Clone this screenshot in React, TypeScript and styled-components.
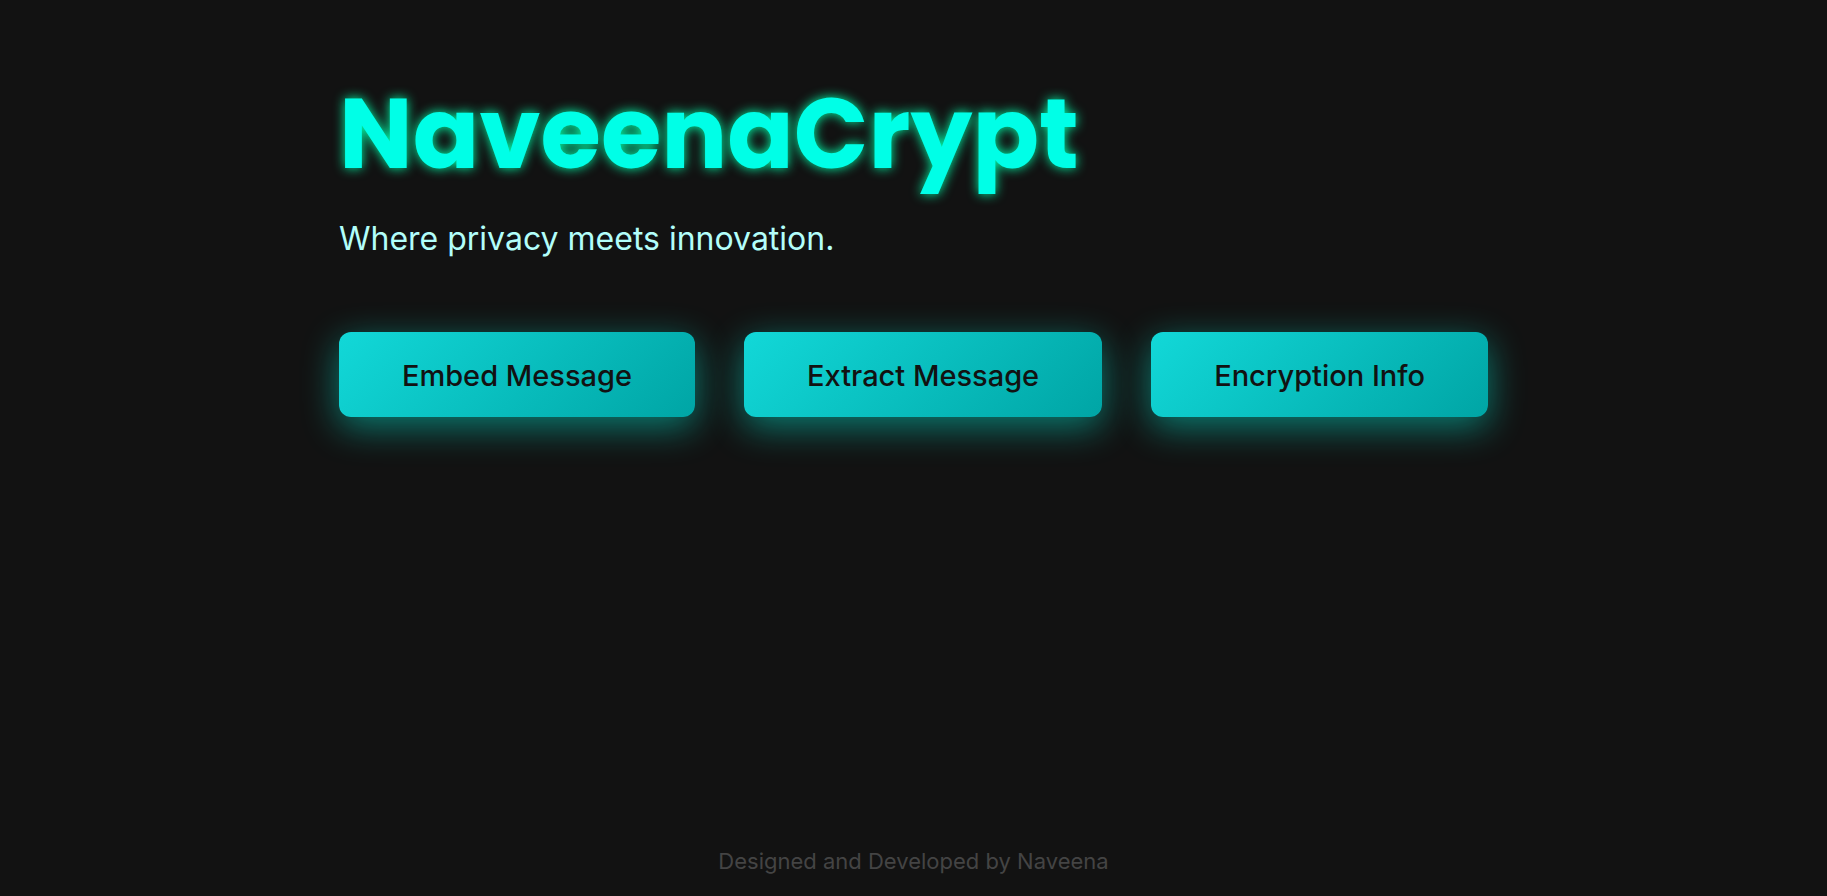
import React from "react";
import styled, { createGlobalStyle } from "styled-components";

const GlobalStyle = createGlobalStyle`
  *, *::before, *::after { box-sizing: border-box; }
  body {
    margin: 0;
    background: #121212;
    font-family: Inter, "Liberation Sans", sans-serif;
  }
`;

const Page = styled.div`
  min-height: 100vh;
  display: flex;
  flex-direction: column;
  align-items: center;
  padding: 78px 24px 17px;
`;

const Main = styled.main`
  flex: 1;
`;

const Title = styled.h1`
  margin: 0;
  font-family: Poppins, Inter, "Liberation Sans", sans-serif;
  font-feature-settings: "cv11" 1;
  font-size: 98px;
  line-height: 112px;
  font-weight: 700;
  color: #00ffe7;
  text-shadow: 0 0 12px #00ffaa;
`;

const Tagline = styled.p`
  margin: 29px 0 73px;
  font-size: 32px;
  line-height: 40px;
  font-weight: 400;
  color: #b2fefa;
`;

const Actions = styled.div`
  display: flex;
  flex-wrap: wrap;
  gap: 49px;
`;

const ActionButton = styled.button`
  border: none;
  border-radius: 12px;
  padding: 25px 63px 23px;
  background: linear-gradient(135deg, #12d8d8, #00a5a5);
  color: #121212;
  font-family: inherit;
  font-size: 29px;
  line-height: 37px;
  font-weight: 500;
  cursor: pointer;
  box-shadow: 0 10px 36px rgba(0, 255, 231, 0.45);
`;

const Footer = styled.footer`
  font-size: 22px;
  line-height: 36px;
  font-weight: 400;
  color: #444;
`;

const actions = ["Embed Message", "Extract Message", "Encryption Info"];

export default function App() {
  return (
    <>
      <GlobalStyle />
      <Page>
        <Main>
          <Title>NaveenaCrypt</Title>
          <Tagline>Where privacy meets innovation.</Tagline>
          <Actions>
            {actions.map((label) => (
              <ActionButton key={label} type="button">{label}</ActionButton>
            ))}
          </Actions>
        </Main>
        <Footer>Designed and Developed by Naveena</Footer>
      </Page>
    </>
  );
}
